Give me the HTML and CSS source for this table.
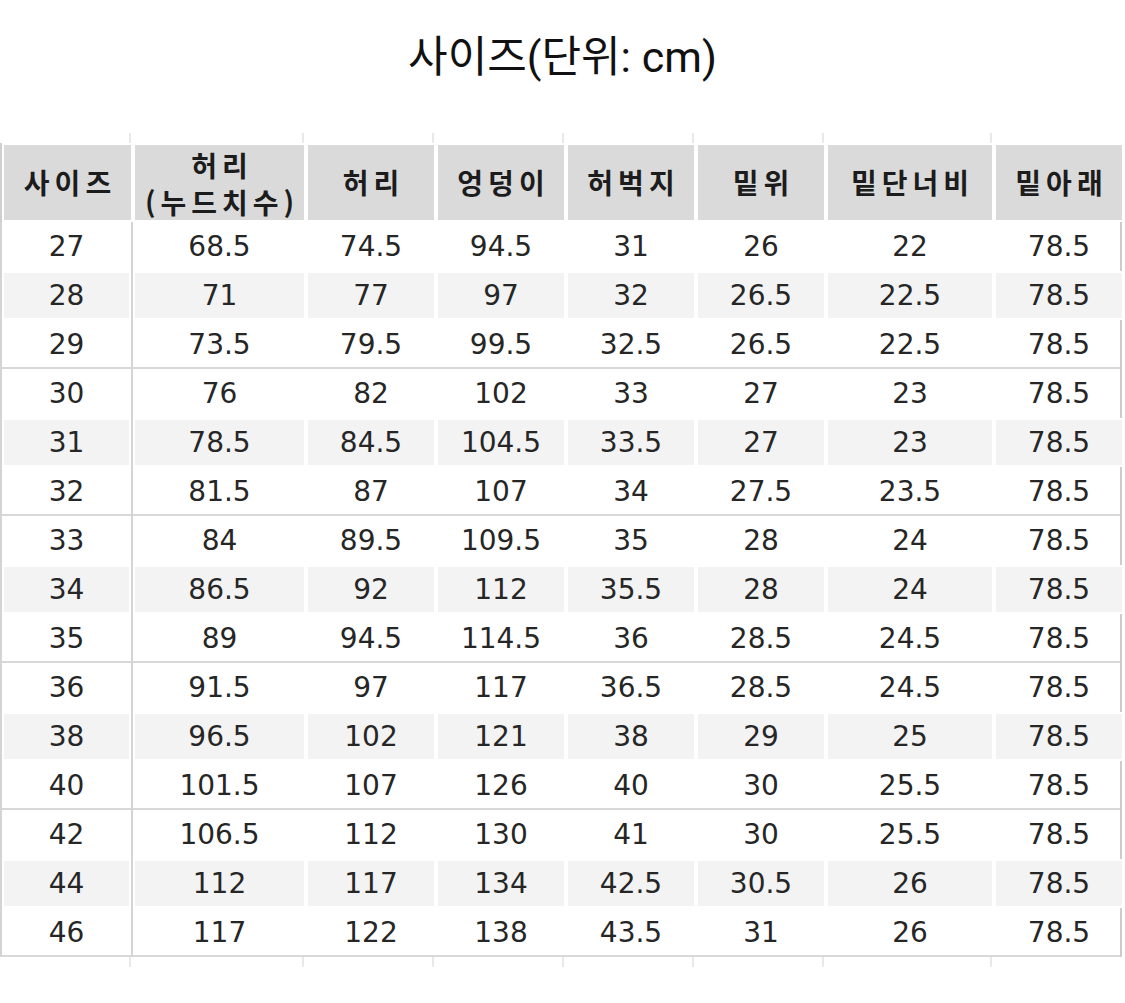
FILE: index.html
```html
<!DOCTYPE html>
<html lang="ko">
<head>
<meta charset="utf-8">
<title>사이즈</title>
<link rel="stylesheet" href="styles.css">
</head>
<body>
<h1 class="title">사이즈(단위: cm)</h1>
<div class="chart">
  <div class="ticks"><span></span><span></span><span></span><span></span><span></span><span></span><span></span><span></span></div>
  <div class="head">
    <div class="hcell">사이즈</div>
    <div class="hcell two">허리<br>(누드치수)</div>
    <div class="hcell">허리</div>
    <div class="hcell">엉덩이</div>
    <div class="hcell">허벅지</div>
    <div class="hcell">밑위</div>
    <div class="hcell">밑단너비</div>
    <div class="hcell">밑아래</div>
  </div>
  <div class="body">
    <div class="row"><div class="cell">27</div><div class="cell">68.5</div><div class="cell">74.5</div><div class="cell">94.5</div><div class="cell">31</div><div class="cell">26</div><div class="cell">22</div><div class="cell">78.5</div></div>
    <div class="row alt"><div class="cell">28</div><div class="cell">71</div><div class="cell">77</div><div class="cell">97</div><div class="cell">32</div><div class="cell">26.5</div><div class="cell">22.5</div><div class="cell">78.5</div></div>
    <div class="row end"><div class="cell">29</div><div class="cell">73.5</div><div class="cell">79.5</div><div class="cell">99.5</div><div class="cell">32.5</div><div class="cell">26.5</div><div class="cell">22.5</div><div class="cell">78.5</div></div>
    <div class="row"><div class="cell">30</div><div class="cell">76</div><div class="cell">82</div><div class="cell">102</div><div class="cell">33</div><div class="cell">27</div><div class="cell">23</div><div class="cell">78.5</div></div>
    <div class="row alt"><div class="cell">31</div><div class="cell">78.5</div><div class="cell">84.5</div><div class="cell">104.5</div><div class="cell">33.5</div><div class="cell">27</div><div class="cell">23</div><div class="cell">78.5</div></div>
    <div class="row end"><div class="cell">32</div><div class="cell">81.5</div><div class="cell">87</div><div class="cell">107</div><div class="cell">34</div><div class="cell">27.5</div><div class="cell">23.5</div><div class="cell">78.5</div></div>
    <div class="row"><div class="cell">33</div><div class="cell">84</div><div class="cell">89.5</div><div class="cell">109.5</div><div class="cell">35</div><div class="cell">28</div><div class="cell">24</div><div class="cell">78.5</div></div>
    <div class="row alt"><div class="cell">34</div><div class="cell">86.5</div><div class="cell">92</div><div class="cell">112</div><div class="cell">35.5</div><div class="cell">28</div><div class="cell">24</div><div class="cell">78.5</div></div>
    <div class="row end"><div class="cell">35</div><div class="cell">89</div><div class="cell">94.5</div><div class="cell">114.5</div><div class="cell">36</div><div class="cell">28.5</div><div class="cell">24.5</div><div class="cell">78.5</div></div>
    <div class="row"><div class="cell">36</div><div class="cell">91.5</div><div class="cell">97</div><div class="cell">117</div><div class="cell">36.5</div><div class="cell">28.5</div><div class="cell">24.5</div><div class="cell">78.5</div></div>
    <div class="row alt"><div class="cell">38</div><div class="cell">96.5</div><div class="cell">102</div><div class="cell">121</div><div class="cell">38</div><div class="cell">29</div><div class="cell">25</div><div class="cell">78.5</div></div>
    <div class="row end"><div class="cell">40</div><div class="cell">101.5</div><div class="cell">107</div><div class="cell">126</div><div class="cell">40</div><div class="cell">30</div><div class="cell">25.5</div><div class="cell">78.5</div></div>
    <div class="row"><div class="cell">42</div><div class="cell">106.5</div><div class="cell">112</div><div class="cell">130</div><div class="cell">41</div><div class="cell">30</div><div class="cell">25.5</div><div class="cell">78.5</div></div>
    <div class="row alt"><div class="cell">44</div><div class="cell">112</div><div class="cell">117</div><div class="cell">134</div><div class="cell">42.5</div><div class="cell">30.5</div><div class="cell">26</div><div class="cell">78.5</div></div>
    <div class="row end"><div class="cell">46</div><div class="cell">117</div><div class="cell">122</div><div class="cell">138</div><div class="cell">43.5</div><div class="cell">31</div><div class="cell">26</div><div class="cell">78.5</div></div>
  </div>
  <div class="ticks"><span></span><span></span><span></span><span></span><span></span><span></span><span></span><span></span></div>
</div>
</body>
</html>
```

FILE: styles.css
```css
html, body {
  margin: 0;
  padding: 0;
  background: #ffffff;
}

.title {
  margin: 0;
  height: 133px;
  box-sizing: border-box;
  padding-top: 31px;
  text-align: center;
  font-family: Roboto, "Noto Sans CJK KR", sans-serif;
  font-size: 43px;
  font-weight: 400;
  line-height: 52px;
  color: #111111;
}

.chart {
  width: 1122px;
}

.ticks,
.head,
.row {
  display: grid;
  grid-template-columns: 131px 173px 130px 130px 130px 130px 168px 130px;
}

.ticks {
  height: 10px;
}

.ticks span {
  border-right: 2px solid #e8e8e8;
}

.ticks span:last-child {
  border-right: none;
}

.head {
  height: 79px;
  border-left: 2px solid #cfcfcf;
}

.hcell {
  background: #dadada;
  box-shadow: inset 0 0 0 2px #ffffff;
  display: flex;
  align-items: center;
  justify-content: center;
  text-align: center;
  font-family: "Noto Sans CJK KR", sans-serif;
  font-size: 28px;
  font-weight: 700;
  letter-spacing: 5px;
  line-height: 37px;
  color: #1c1c1c;
  padding-left: 5px;
}

.hcell.two {
  padding-top: 2px;
}

.body {
  border-left: 2px solid #d4d4d4;
  border-right: 2px solid #cccccc;
}

.row {
  height: 49px;
  box-sizing: border-box;
}

.row.end {
  border-bottom: 2px solid #d8d8d8;
}

.row.end .cell {
  margin-bottom: -2px;
}

.cell {
  display: flex;
  align-items: center;
  justify-content: center;
  font-family: "DejaVu Sans", sans-serif;
  font-size: 28px;
  color: #262626;
}

.row.alt .cell {
  background: #f3f3f3;
  box-shadow: inset 0 0 0 2px #ffffff;
}

.cell:first-child {
  border-right: 2px solid #d4d4d4;
}
```
